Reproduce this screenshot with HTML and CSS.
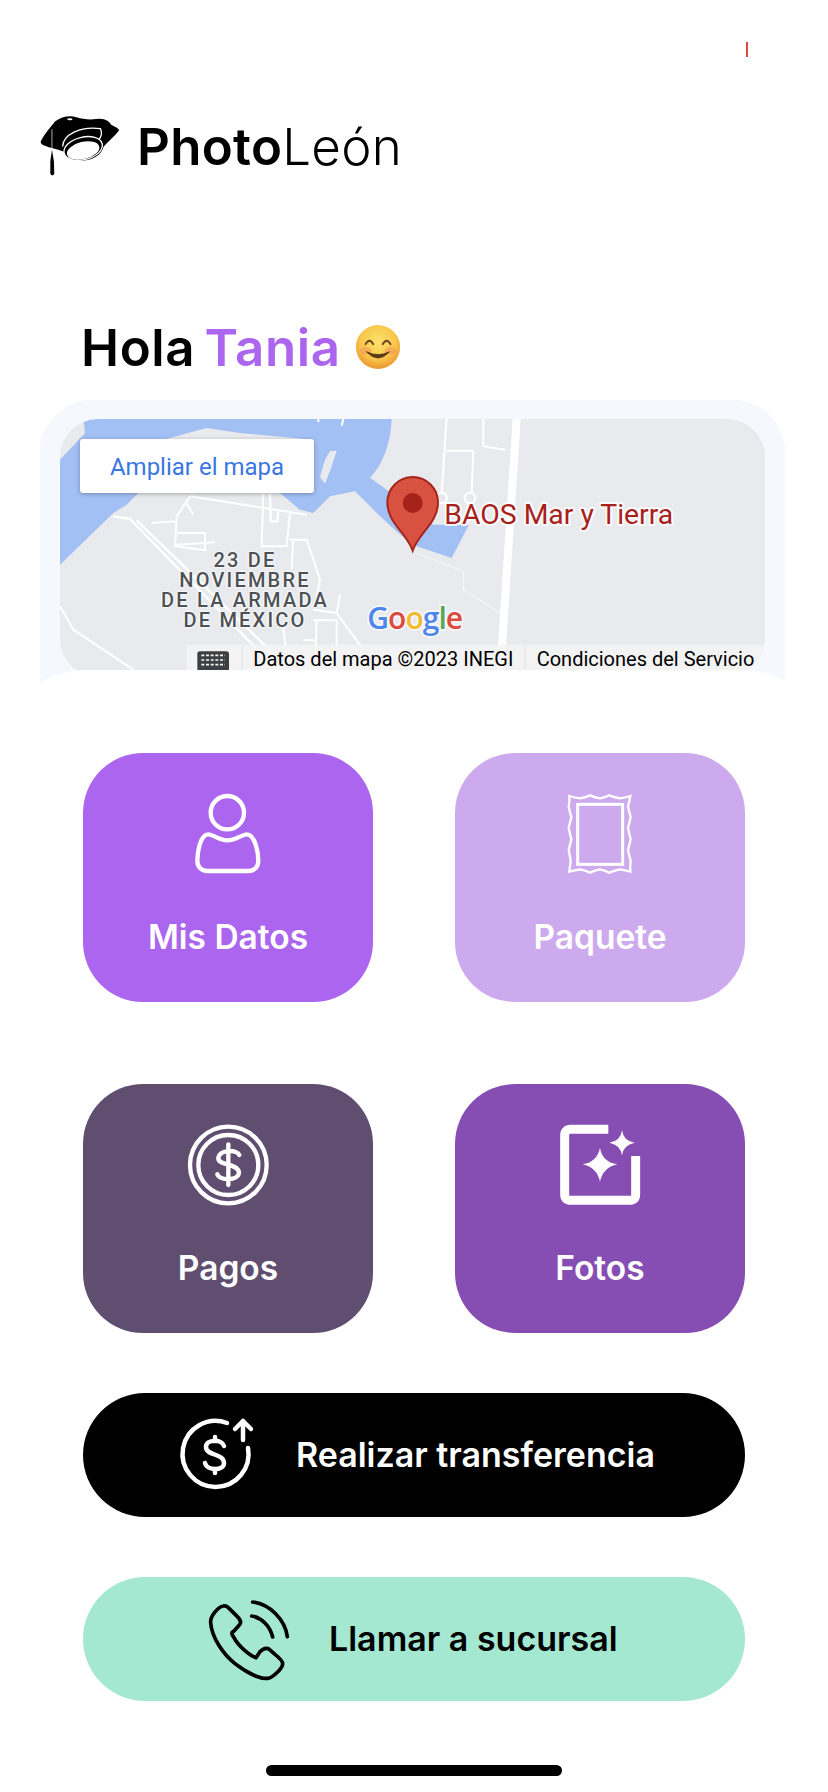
FILE: index.html
```html
<!DOCTYPE html>
<html lang="es">

<head>
    <meta charset="UTF-8">
    <meta name="viewport" content="width=device-width, initial-scale=1.0">
    <title>PhotoLeón</title>
    <link rel="stylesheet" href="styles.css">
</head>

<body>
    <div class="topbar"><span class="caret"></span></div>

    <div class="brand">
        <svg class="brand-mark" viewBox="30 40 250 200">
            <path class="ink" d="M32 125 C45 100 60 85 75 65 C95 50 120 45 140 52 C160 58 180 60 200 57 C225 53 240 65 245 75 C255 80 268 85 268 92 C255 110 235 125 222 140 C215 165 190 183 150 183 C125 183 105 170 100 155 C80 148 60 145 45 138 C35 135 32 130 32 125 Z"/>
            <path class="lens" d="M98 140 C100 105 150 78 212 86 C218 100 215 112 205 122"/>
            <ellipse class="lens-ring" cx="160" cy="146" rx="59" ry="34" transform="rotate(-14 160 146)"/>
            <ellipse class="lens-glass" cx="160" cy="152" rx="50" ry="26" transform="rotate(-14 160 152)"/>
            <ellipse class="flash" cx="120" cy="58" rx="8" ry="3"/>
            <path class="cord" d="M66 88 L66 150"/>
            <path class="ink" d="M66 150 L72 185 L73 222 Q67 232 61 222 L61 185 Z"/>
        </svg>
        <span class="brand-name"><b>Photo</b>León</span>
    </div>

    <h1 class="greeting">
        <span>Hola <em>Tania</em></span>
        <svg class="smiley" viewBox="0 0 48 48" role="img" aria-label="😊">
            <defs>
                <radialGradient id="face" cx="50%" cy="38%" r="62%">
                    <stop offset="0" stop-color="#fbe26c"/>
                    <stop offset=".65" stop-color="#f8c64a"/>
                    <stop offset="1" stop-color="#ec9430"/>
                </radialGradient>
            </defs>
            <circle cx="24" cy="24" r="23" fill="url(#face)"/>
            <ellipse cx="11" cy="28" rx="6" ry="4" fill="#f3955a" opacity=".55"/>
            <ellipse cx="37" cy="28" rx="6" ry="4" fill="#f3955a" opacity=".55"/>
            <path class="face-line" d="M11 21 Q15 14 19 21 M29 21 Q33 14 37 21"/>
            <path class="face-smile" d="M12 29 Q24 42 36 29 Q24 35 12 29 Z"/>
        </svg>
    </h1>

    <section class="map-frame">
        <div class="map">
            <svg class="map-art" viewBox="90 88 2115 774">
                <rect class="land" x="90" y="88" width="2115" height="774"/>
                <path class="water" d="M160 88 L1085 88 C1080 170 1060 220 1020 265 C1060 290 1120 340 1210 405 L1317 405 L1265 505 L1160 470 C1110 440 1040 370 975 305 L900 320 L850 370 L810 360 L750 310 L790 230 L850 150 L630 130 L530 115 L400 150 L300 200 L325 310 L290 345 L250 370 L90 525 L90 210 L165 130 Z"/>
                <path class="land" d="M870 262 L885 210 L900 185 L920 183 L905 230 L885 282 Z"/>
                <path class="road" d="M480 320 L830 375 M700 310 L695 470 L770 470 L780 372 M480 320 L440 380 L435 470 L530 482 M440 430 L525 430 L525 480 M440 465 L555 458 M365 400 L440 395 M470 340 L490 375 M780 450 L830 450 L870 570 L860 620 M790 450 L785 540 M930 615 L920 670 L1000 780 M850 660 L920 670 M760 710 L770 810 M850 692 L920 692 L920 810 M860 692 L855 850 M820 752 L855 752 M90 650 L130 720 L310 840"/>
                <path class="road-wide" d="M250 380 L300 388 L760 860 M320 392 L800 860 M720 310 L722 395 L742 395 L745 365"/>
                <path class="road" d="M1250 88 L1235 310 M1250 183 L1330 183 M1360 88 L1360 170 L1425 180 M1330 183 L1325 310 M865 88 L865 97 M940 88 L935 108"/>
                <circle class="road" cx="1235" cy="325" r="16"/>
                <circle class="road" cx="1320" cy="325" r="16"/>
                <path class="road-thin" d="M1160 490 L1300 545 L1300 600 L1410 670"/>
                <path class="road-main" d="M1460 88 L1410 862"/>

                <text class="google" x="1012" y="718"><tspan class="g-blue">G</tspan><tspan class="g-red">o</tspan><tspan class="g-yellow">o</tspan><tspan class="g-blue">g</tspan><tspan class="g-green">l</tspan><tspan class="g-red">e</tspan></text>

                <path class="pin" d="M1148 483 C1130 430 1072 400 1072 338 A76 76 0 0 1 1224 338 C1224 400 1166 430 1148 483 Z"/>
                <circle class="pin-dot" cx="1148" cy="340" r="30"/>
                <text class="pin-label" x="1243" y="402">BAOS Mar y Tierra</text>

                <rect class="attrib" x="470" y="765" width="163" height="97"/>
                <rect class="attrib" x="640" y="765" width="842" height="97"/>
                <rect class="attrib" x="1488" y="765" width="717" height="97"/>
                <rect class="key-body" x="502" y="785" width="95" height="60" rx="8"/>
                <path class="key-grid" d="M514 797 H585 M514 811 H585 M514 825 H585" />
                <text class="attrib-text" x="670" y="830">Datos del mapa ©2023 INEGI</text>
                <text class="attrib-text" x="1520" y="830">Condiciones del Servicio</text>
            </svg>
            <div class="place-label">23 DE
NOVIEMBRE
DE LA ARMADA
DE MÉXICO</div>
            <a class="map-link" href="javascript:;">Ampliar el mapa</a>
        </div>
    </section>

    <main class="sheet">
        <div class="cards">
            <a class="card card-data" href="javascript:;">
                <svg class="card-icon" viewBox="-6 0 360 330">
                    <circle class="line" cx="172" cy="95" r="50"/>
                    <path class="line" d="M115 160 C130 160 145 178 172 178 C200 178 215 160 230 160 C255 160 265 215 265 240 C265 258 252 270 235 270 L112 270 C95 270 82 258 82 240 C82 215 90 160 115 160 Z"/>
                </svg>
                <span>Mis Datos</span>
            </a>
            <a class="card card-package" href="javascript:;">
                <svg class="card-icon" viewBox="0 0 360 330">
                    <path class="line-fine" d="M88 45 Q105 50 120 52 Q135 50 150 43 Q165 50 180 52 Q195 50 208 43 Q225 50 240 52 Q255 50 271 45 Q268 60 264 78 Q268 95 272 108 Q268 125 264 142 Q268 160 272 175 Q268 190 264 208 Q268 225 272 240 Q270 255 271 272 Q255 268 240 265 Q225 268 208 275 Q195 268 180 265 Q165 268 150 275 Q135 268 120 265 Q105 268 88 272 Q90 255 92 240 Q90 225 86 208 Q90 190 94 175 Q90 160 86 142 Q90 125 94 108 Q90 95 86 78 Q90 60 88 45 Z"/>
                    <rect class="line-frame" x="113" y="70" width="135" height="180"/>
                </svg>
                <span>Paquete</span>
            </a>
            <a class="card card-pay" href="javascript:;">
                <svg class="card-icon" viewBox="-6 3 360 330">
                    <circle class="line" cx="175" cy="162" r="115"/>
                    <circle class="line" cx="175" cy="162" r="90"/>
                    <path class="line" d="M175 100 V222 M208 132 C200 115 150 115 145 140 C142 165 205 155 207 185 C205 210 150 210 142 190"/>
                </svg>
                <span>Pagos</span>
            </a>
            <a class="card card-photos" href="javascript:;">
                <svg class="card-icon" viewBox="0 3 360 330">
                    <path class="line-heavy" d="M205 55 L92 55 Q74 55 74 73 L74 250 Q74 268 92 268 L269 268 Q287 268 287 250 L287 135"/>
                    <path class="solid" d="M180 110 Q186 152 232 160 Q188 170 180 213 Q172 170 128 160 Q172 152 180 110 Z"/>
                    <path class="solid" d="M246 58 Q250 90 284 95 Q250 102 246 133 Q242 102 208 95 Q242 90 246 58 Z"/>
                </svg>
                <span>Fotos</span>
            </a>
        </div>

        <a class="action action-transfer" href="javascript:;">
            <svg class="action-icon" viewBox="175 1415 80 80">
                <path class="line-thin" d="M227 1423 A33 33 0 1 0 248 1448"/>
                <path class="line-thin" d="M243 1440 V1421 M235 1429 L243 1421 L251 1429"/>
                <path class="line-thin" d="M215 1437 V1441 M215 1469 V1473 M224 1446 C222 1439 206 1439 206 1447 C206 1456 224 1453 224 1463 C224 1471 207 1471 205 1463"/>
            </svg>
            <span>Realizar transferencia</span>
        </a>
        <a class="action action-call" href="javascript:;">
            <svg class="action-icon" viewBox="141 468 252 252">
                <path class="phone" d="M190 495 C175 497 150 525 152 545 C155 590 190 640 225 668 C260 695 300 715 325 712 C340 708 368 682 368 668 C368 660 355 648 345 640 L328 625 C318 618 310 622 300 632 L288 650 C270 645 235 615 222 590 C215 580 212 575 222 570 L238 552 C245 545 240 535 232 527 L205 500 C200 495 195 494 190 495 Z"/>
                <path class="phone" d="M275 525 C305 530 330 555 338 588 M278 483 C330 490 375 535 382 587"/>
            </svg>
            <span>Llamar a sucursal</span>
        </a>
        <div class="home-bar"></div>
    </main>
</body>

</html>
```

FILE: styles.css
```css
html,
body {
    margin: 0;
    padding: 0;
}

body {
    width: 828px;
    height: 1792px;
    overflow: hidden;
    background: #fff;
    color: #000;
    font-family: Inter, "Liberation Sans", sans-serif;
}

a {
    text-decoration: none;
    color: inherit;
}

/* cabecera */
.topbar {
    height: 113px;
    padding: 42px 80px 0 0;
    box-sizing: border-box;
    display: flex;
    justify-content: flex-end;
}

.caret {
    width: 2px;
    height: 15px;
    background: #e8473a;
}

.brand {
    height: 67px;
    padding-left: 40px;
    display: flex;
    align-items: center;
    gap: 14px;
}

.brand-mark {
    width: 83px;
    height: 67px;
}

.ink {
    fill: #000;
}

.lens {
    fill: none;
    stroke: #fff;
    stroke-width: 4;
}

.lens-ring {
    fill: #000;
    stroke: #fff;
    stroke-width: 4;
}

.lens-glass {
    fill: #fff;
}

.flash {
    fill: #fff;
}

.cord {
    fill: none;
    stroke: #fff;
    stroke-width: 2;
}

.brand-name {
    font-size: 51px;
    font-weight: 300;
    letter-spacing: .3px;
}

.brand-name b {
    font-weight: 600;
}

.greeting {
    margin: 140px 0 0;
    padding-left: 81px;
    height: 54px;
    display: flex;
    align-items: center;
    gap: 14px;
    font-size: 51px;
    font-weight: 600;
    letter-spacing: .6px;
    word-spacing: -4px;
}

.greeting em {
    font-style: normal;
    color: #ab65ee;
}

.smiley {
    width: 46px;
    height: 46px;
}

.face-line {
    fill: none;
    stroke: #6b4320;
    stroke-width: 2;
    stroke-linecap: round;
}

.face-smile {
    fill: #5d3a1a;
    stroke: #5d3a1a;
    stroke-width: 1;
}

/* mapa */
.map-frame {
    margin: 26px 43px 0 40px;
    height: 300px;
    padding: 19px 20px 0;
    box-sizing: border-box;
    background: #f5f8fc;
    border-radius: 52px 52px 0 0;
}

.map {
    position: relative;
    height: 258px;
    border-radius: 38px;
    overflow: hidden;
}

.map-art {
    display: block;
    width: 705px;
    height: 258px;
}

.land {
    fill: #e8eaed;
}

.water {
    fill: #a3c0f5;
}

.road,
.road-wide,
.road-thin,
.road-main {
    fill: none;
    stroke: #fff;
    stroke-linejoin: round;
}

.road {
    stroke-width: 6;
}

.road-wide {
    stroke-width: 7;
}

.road-thin {
    stroke: #f4f5f6;
    stroke-width: 4;
}

.road-main {
    stroke-width: 24;
}

.pin-label,
.google {
    paint-order: stroke;
    stroke: #fff;
    stroke-linejoin: round;
}

.place-label {
    position: absolute;
    left: 65px;
    top: 131px;
    width: 240px;
    text-align: center;
    white-space: pre-line;
    font-family: Roboto, sans-serif;
    font-weight: 500;
    font-size: 20px;
    line-height: 20px;
    letter-spacing: 2.2px;
    color: #4d5156;
    text-shadow: 0 0 2px #fff, 0 0 2px #fff, 0 0 3px #fff;
}

.pin {
    fill: #d95140;
    stroke: #a4261c;
    stroke-width: 6;
}

.pin-dot {
    fill: #a5231b;
}

.pin-label {
    font-family: Roboto, sans-serif;
    font-size: 85px;
    fill: #a8201a;
    stroke-width: 12;
    stroke-opacity: .8;
}

.google {
    font-family: "Open Sans", sans-serif;
    font-size: 90px;
    font-weight: 600;
    letter-spacing: -3px;
    stroke-width: 10;
    stroke-opacity: .7;
}

.g-blue {
    fill: #4f86ec;
}

.g-red {
    fill: #dc4b3f;
}

.g-yellow {
    fill: #f0bb2f;
}

.g-green {
    fill: #58a55c;
}

.attrib {
    fill: #f4f4f4;
    fill-opacity: .85;
}

.key-body {
    fill: #3c4043;
}

.key-grid {
    fill: none;
    stroke: #f4f4f4;
    stroke-width: 5;
    stroke-dasharray: 9 5;
}

.attrib-text {
    font-family: Roboto, sans-serif;
    font-size: 60px;
    fill: #000;
}

.map-link {
    position: absolute;
    left: 20px;
    top: 20px;
    width: 234px;
    height: 54px;
    display: flex;
    align-items: center;
    justify-content: center;
    background: #fff;
    border-radius: 3px;
    box-shadow: 0 1px 4px rgba(0, 0, 0, .3);
    color: #3a76e3;
    font-family: Roboto, sans-serif;
    font-size: 24px;
    padding-top: 2px;
    box-sizing: border-box;
}

/* panel blanco */
.sheet {
    position: relative;
    margin-top: -30px;
    height: 1122px;
    padding: 82.5px 83px 0;
    box-sizing: border-box;
    background: #fff;
    border-radius: 85px 85px 0 0;
}

.cards {
    display: grid;
    grid-template-columns: 290px 290px;
    grid-auto-rows: 249px;
    gap: 82px;
}

.card {
    display: flex;
    flex-direction: column;
    align-items: center;
    padding-top: 28px;
    box-sizing: border-box;
    border-radius: 60px;
    color: #fff;
    font-size: 33.5px;
    font-weight: 600;
    line-height: 40px;
}

.card-icon {
    width: 120px;
    height: 110px;
    margin-bottom: 26px;
}

.card-data {
    background: #ab65ee;
}

.card-package {
    background: #cdaaed;
}

.card-pay {
    background: #5f4e70;
}

.card-photos {
    background: #864db3;
}

.line,
.line-fine,
.line-frame,
.line-heavy,
.line-thin,
.phone {
    fill: none;
    stroke-linecap: round;
    stroke-linejoin: round;
}

.line,
.line-fine,
.line-frame,
.line-heavy {
    stroke: #fff;
}

.line {
    stroke-width: 13;
}

.line-fine {
    stroke-width: 7;
    stroke-linejoin: miter;
}

.line-frame {
    stroke-width: 9;
    stroke-linejoin: miter;
}

.line-heavy {
    stroke-width: 27;
    stroke-linecap: butt;
}

.solid {
    fill: #fff;
}

.action {
    height: 124px;
    margin-top: 60px;
    display: flex;
    align-items: center;
    box-sizing: border-box;
    border-radius: 62px;
    font-size: 34px;
    font-weight: 600;
}

.action-transfer {
    padding-left: 92px;
    gap: 41px;
    background: #000;
    color: #fff;
}

.action-call {
    padding-left: 124px;
    gap: 38px;
    background: #a4e8d2;
    color: #000;
}

.action-icon {
    flex: none;
}

.action-transfer .action-icon {
    width: 80px;
    height: 80px;
}

.action-call .action-icon {
    width: 84px;
    height: 84px;
}

.line-thin {
    stroke: #fff;
    stroke-width: 4.5;
}

.phone {
    stroke: #000;
    stroke-width: 11;
}

.home-bar {
    width: 296px;
    height: 11px;
    margin: 64px auto 0;
    border-radius: 6px;
    background: #000;
}
```
